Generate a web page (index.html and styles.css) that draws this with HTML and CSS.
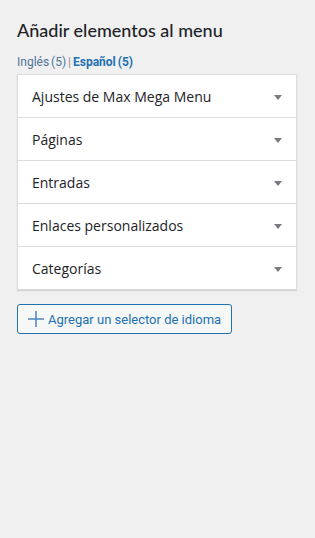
FILE: index.html
```html
<!DOCTYPE html>
<html lang="es">
<head>
    <meta charset="UTF-8">
    <meta name="viewport" content="width=device-width, initial-scale=1.0">
    <title>Menús</title>
    <link rel="stylesheet" href="styles.css">
</head>
<body>
    <div class="menu-sidebar">
        <h2>Añadir elementos al menu</h2>

        <!-- Language switch -->
        <div class="lang-links">
            <a href="#" class="lang">Inglés (5)</a>
            <span class="sep">|</span>
            <a href="#" class="lang current">Español (5)</a>
        </div>

        <div class="accordion">
            <div class="accordion-section">
                <h3>Ajustes de Max Mega Menu</h3>
                <span class="arrow"></span>
            </div>
            <div class="accordion-section">
                <h3>Páginas</h3>
                <span class="arrow"></span>
            </div>
            <div class="accordion-section">
                <h3>Entradas</h3>
                <span class="arrow"></span>
            </div>
            <div class="accordion-section">
                <h3>Enlaces personalizados</h3>
                <span class="arrow"></span>
            </div>
            <div class="accordion-section">
                <h3>Categorías</h3>
                <span class="arrow"></span>
            </div>
        </div>

        <button class="button">
            <svg class="plus" width="16" height="16" viewBox="0 0 16 16">
                <path d="M8 0v16M0 8h16" stroke="#4f86bd" stroke-width="1.5" fill="none"/>
            </svg>
            Agregar un selector de idioma
        </button>
    </div>
</body>
</html>
```

FILE: styles.css
```css
body {
    font-family: "Open Sans", "Noto Sans", sans-serif;
    background-color: #f0f0f1;
    color: #1d2327;
    margin: 0;
    padding: 0;
}
.menu-sidebar {
    padding: 19px 18px 0 17px;
}
.menu-sidebar h2 {
    font-family: Lato, sans-serif;
    font-size: 18px;
    font-weight: 500;
    line-height: 22px;
    margin: 0 0 12px;
}
.lang-links {
    font-family: Roboto, sans-serif;
    font-size: 12px;
    line-height: 18px;
    word-spacing: -1px;
    color: #8c8f94;
    margin-bottom: 3px;
}
.lang {
    color: #4e7498;
    text-decoration: none;
}
.lang.current {
    color: #2271b1;
    font-weight: 700;
}
.accordion {
    background-color: white;
    border: 1px solid #dcdcde;
    box-shadow: 0 1px 1px rgba(0, 0, 0, 0.12);
}
.accordion-section {
    display: flex;
    align-items: center;
    justify-content: space-between;
    height: 42px;
    padding: 0 14px 0 14px;
    border-top: 1px solid #dcdcde;
}
.accordion-section:first-child {
    border-top: none;
}
.accordion-section h3 {
    margin: 0;
    font-size: 14px;
    font-weight: 400;
}
.arrow {
    width: 0;
    height: 0;
    margin-top: 2px;
    border-left: 4px solid transparent;
    border-right: 4px solid transparent;
    border-top: 5px solid #787c82;
}
.button {
    display: inline-flex;
    align-items: center;
    gap: 4px;
    margin-top: 14px;
    height: 30px;
    padding: 0 10px;
    font-family: Roboto, sans-serif;
    font-size: 13px;
    color: #2271b1;
    background-color: #f6f7f7;
    border: 1px solid #2271b1;
    border-radius: 3px;
    cursor: pointer;
}
```
